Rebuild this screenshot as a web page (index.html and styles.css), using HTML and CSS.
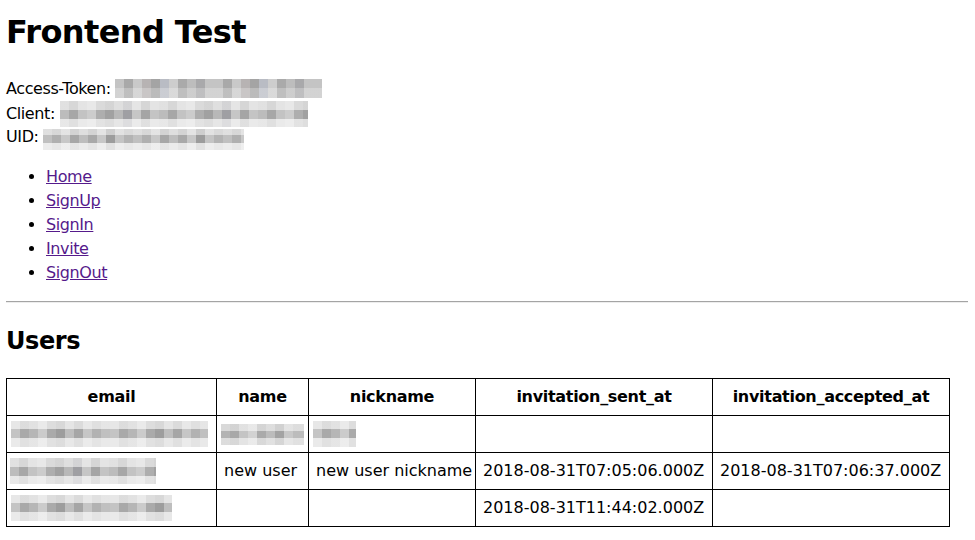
FILE: index.html
```html
<!DOCTYPE html>
<html lang="en">
<head>
<meta charset="utf-8">
<title>Frontend Test</title>
<link rel="stylesheet" href="styles.css">
</head>
<body>
<h1 class="title">Frontend Test</h1>
<div class="auth">
  <div class="auth-line">Access-Token: <span class="mosaic mosaic-2" style="width:207px" title="redacted"></span></div>
  <div class="auth-line">Client: <span class="mosaic mosaic-3" style="width:248px" title="redacted"></span></div>
  <div class="auth-line">UID: <span class="mosaic mosaic-3b" style="width:201px" title="redacted"></span></div>
</div>
<ul class="nav">
  <li><a href="#">Home</a></li>
  <li><a href="#">SignUp</a></li>
  <li><a href="#">SignIn</a></li>
  <li><a href="#">Invite</a></li>
  <li><a href="#">SignOut</a></li>
</ul>
<hr class="rule">
<h2 class="section">Users</h2>
<table class="users">
  <colgroup>
    <col class="c-email"><col class="c-name"><col class="c-nick"><col class="c-sent"><col class="c-acc">
  </colgroup>
  <thead>
    <tr><th>email</th><th>name</th><th>nickname</th><th>invitation_sent_at</th><th>invitation_accepted_at</th></tr>
  </thead>
  <tbody>
    <tr>
      <td class="blurcell"><span class="mosaic mosaic-3c" style="width:197px"></span></td>
      <td class="blurcell"><span class="mosaic mosaic-2b" style="width:83px"></span></td>
      <td class="blurcell"><span class="mosaic mosaic-3c" style="width:43px"></span></td>
      <td></td>
      <td></td>
    </tr>
    <tr>
      <td class="blurcell shift"><span class="mosaic mosaic-3" style="width:146px"></span></td>
      <td>new user</td>
      <td>new user nickname</td>
      <td>2018-08-31T07:05:06.000Z</td>
      <td>2018-08-31T07:06:37.000Z</td>
    </tr>
    <tr>
      <td class="blurcell"><span class="mosaic mosaic-3c" style="width:161px"></span></td>
      <td></td>
      <td></td>
      <td>2018-08-31T11:44:02.000Z</td>
      <td></td>
    </tr>
  </tbody>
</table>
</body>
</html>
```
FILE: styles.css
```css
html, body {
  margin: 0;
  padding: 0;
  background: #fff;
}
body {
  padding: 0 7px 0 6px;
  font-family: "DejaVu Sans", "Liberation Sans", sans-serif;
  font-size: 16px;
  line-height: 24px;
  color: #000;
}
.title {
  margin: 8px 0 21px;
  font-size: 32px;
  line-height: 48px;
  font-weight: bold;
  letter-spacing: -0.6px;
}
.auth {
  letter-spacing: -0.4px;
}
.auth-line {
  height: 24px;
  white-space: nowrap;
}
.mosaic {
  display: inline-block;
  vertical-align: middle;
  letter-spacing: 0;
  background-color: #cfcfcf;
}
.mosaic-2 {
  height: 19px;
  margin-top: -2px;
  background-image:
    linear-gradient(to bottom, rgba(255,255,255,0) 0 9px, rgba(255,255,255,.25) 9px 19px),
    repeating-linear-gradient(90deg, #c4c4c4 0 9px, #a9a9a9 9px 18px, #c9c9c9 18px 27px, #b7b3b3 27px 36px, #a4a4a4 36px 45px, #b9bcc4 45px 54px, #cdcdcd 54px 63px, #aaaaaa 63px 72px, #bdbdbd 72px 81px, #a9a9ab 81px 90px, #c4c4c4 90px 99px);
}
.mosaic-2b {
  height: 21px;
  background-image:
    linear-gradient(to bottom, rgba(255,255,255,.5) 0 7px, rgba(255,255,255,0) 7px 14px, rgba(255,255,255,.55) 14px 21px),
    repeating-linear-gradient(90deg, #b3b3b3 0 9px, #a8a8a8 9px 18px, #c4c4c4 18px 27px, #d2d2d2 27px 36px, #aaaaaa 36px 45px, #bcbcbc 45px 54px, #a3a3a3 54px 63px, #c8c8c8 63px 72px, #bcbcbc 72px 83px);
}
.mosaic-3 {
  height: 26px;
  background-image:
    linear-gradient(to bottom, rgba(255,255,255,.55) 0 9px, rgba(255,255,255,0) 9px 18px, rgba(255,255,255,.65) 18px 26px),
    repeating-linear-gradient(90deg, #bcbcbc 0 9px, #a7a7a7 9px 18px, #c3c3c3 18px 27px, #cccccc 27px 36px, #aeaeae 36px 45px, #a1a1a1 45px 54px, #b8b8b8 54px 63px, #9f9fa3 63px 72px, #c6c6c6 72px 81px, #a5a5a5 81px 90px, #c4c4c4 90px 99px);
}
.mosaic-3b {
  height: 21px;
  margin-top: 3px;
  background-image:
    linear-gradient(to bottom, rgba(255,255,255,.5) 0 6px, rgba(255,255,255,0) 6px 14px, rgba(255,255,255,.7) 14px 21px),
    repeating-linear-gradient(90deg, #c0c0c0 0 9px, #b0b0b0 9px 18px, #c8c8c8 18px 27px, #a7a7a7 27px 36px, #bdbdbd 36px 45px, #a9a9a9 45px 54px, #c7c7c7 54px 63px, #9c9c9c 63px 72px, #c4c4c4 72px 81px, #b3b3b3 81px 90px);
}
.mosaic-3c {
  height: 26px;
  background-image:
    linear-gradient(to bottom, rgba(255,255,255,.6) 0 8px, rgba(255,255,255,0) 8px 17px, rgba(255,255,255,.65) 17px 26px),
    repeating-linear-gradient(90deg, #c4c4c4 0 9px, #a9a9a9 9px 18px, #b6b6b6 18px 27px, #cbcbcb 27px 36px, #aaaaaa 36px 45px, #9d9d9d 45px 54px, #bebebe 54px 63px, #a6a6a6 63px 72px, #c6c6c6 72px 81px, #b2b2b2 81px 90px, #c0c0c0 90px 99px);
}
.nav {
  margin: 16px 0;
  padding-left: 40px;
  letter-spacing: -0.4px;
}
.nav a {
  color: #551a8b;
}
.rule {
  margin: 0;
  height: 0;
  border: 0;
  border-top: 1px solid #a4a4a4;
  border-bottom: 1px solid #ededed;
}
.section {
  margin: 20px 0 19px;
  font-size: 24px;
  line-height: 36px;
  font-weight: bold;
  letter-spacing: -0.4px;
}
.users {
  border-collapse: collapse;
  table-layout: fixed;
  width: 944px;
}
.c-email { width: 210px; }
.c-name { width: 92px; }
.c-nick { width: 167px; }
.c-sent { width: 237px; }
.c-acc { width: 237px; }
.users th,
.users td {
  border: 1px solid #000;
  height: 24px;
  padding: 6px 7px;
  line-height: 24px;
  white-space: nowrap;
  overflow: hidden;
  vertical-align: middle;
}
.users th {
  text-align: center;
  font-weight: bold;
  letter-spacing: -0.3px;
}
.users td {
  text-align: left;
}
.users td.blurcell {
  padding: 0 4px;
  font-size: 0;
  line-height: 0;
}
.users td.blurcell.shift {
  padding-left: 3px;
}
```
